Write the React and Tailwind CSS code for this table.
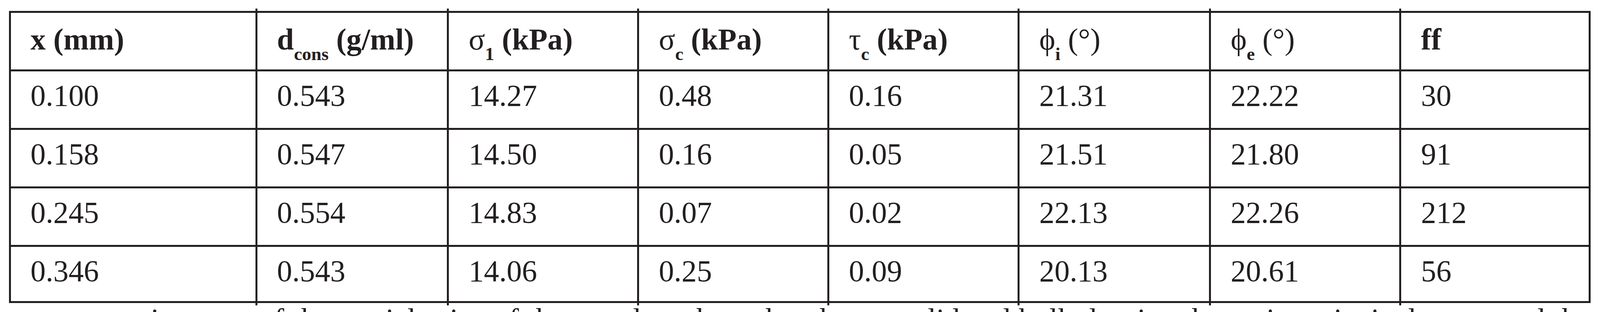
import React from 'react'

const cols = 'grid grid-cols-[778fr_605fr_600fr_600fr_601fr_604fr_601fr_603fr]'

const Sub = ({ children }) => (
  <span className="text-[calc(0.515vw+26px)] leading-none align-[-27px] font-bold">{children}</span>
)

const Greek = ({ children }) => <span className="font-normal">{children}</span>

const headers = [
  <>x (mm)</>,
  <>d<Sub>cons</Sub> (g/ml)</>,
  <><Greek>σ</Greek><Sub>1</Sub> (kPa)</>,
  <><Greek>σ</Greek><Sub>c</Sub> (kPa)</>,
  <><Greek>τ</Greek><Sub>c</Sub> (kPa)</>,
  <><Greek>ϕ</Greek><Sub>i</Sub> <span className="font-normal">(°)</span></>,
  <><Greek>ϕ</Greek><Sub>e</Sub> <span className="font-normal">(°)</span></>,
  <>ff</>,
]

const rows = [
  ['0.100', '0.543', '14.27', '0.48', '0.16', '21.31', '22.22', '30'],
  ['0.158', '0.547', '14.50', '0.16', '0.05', '21.51', '21.80', '91'],
  ['0.245', '0.554', '14.83', '0.07', '0.02', '22.13', '22.26', '212'],
  ['0.346', '0.543', '14.06', '0.25', '0.09', '20.13', '20.61', '56'],
]

function Rule() {
  return <div className="h-[5px] bg-[#231f20]" />
}

function Ticks() {
  return (
    <div className={`${cols} h-[6px]`}>
      {headers.map((_, i) => (
        <div key={i} className={i > 0 ? 'border-l-[5px] border-[#231f20]' : ''} />
      ))}
    </div>
  )
}

function Row({ cells, height, head }) {
  return (
    <div className={cols} style={{ height }}>
      {cells.map((c, i) => (
        <div
          key={i}
          className={`border-l-[5px] border-[#231f20] pl-[1.23vw] leading-[86px] whitespace-nowrap min-w-0 ${i === cells.length - 1 ? 'border-r-[5px]' : ''} ${head ? 'pt-[25px] font-bold' : 'pt-[19px]'}`}
        >
          {c}
        </div>
      ))}
    </div>
  )
}

export default function App() {
  const heights = [145, 145, 145, 139]
  return (
    <div className="bg-white w-full h-[800px] overflow-hidden text-[#231f20] font-['Liberation_Serif','Times_New_Roman',serif] text-[calc(0.8515vw+43px)]">
      <div className="ml-[0.554%] mt-[22px] w-[98.85%]">
        <Ticks />
        <Rule />
        <Row cells={headers} height={145} head />
        {rows.map((r, i) => (
          <React.Fragment key={i}>
            <Rule />
            <Row cells={r} height={heights[i]} />
          </React.Fragment>
        ))}
        <Rule />
        <Ticks />
        <p className="leading-[72px] text-justify">
          parameters in terms of the particle size of the powders show that the consolidated bulk density, the major principal stress and the effective angle of internal friction hardly vary, while the unconfined yield stress and the cohesion decrease and the flow function increases strongly with the particle size of the powder.
        </p>
      </div>
    </div>
  )
}
